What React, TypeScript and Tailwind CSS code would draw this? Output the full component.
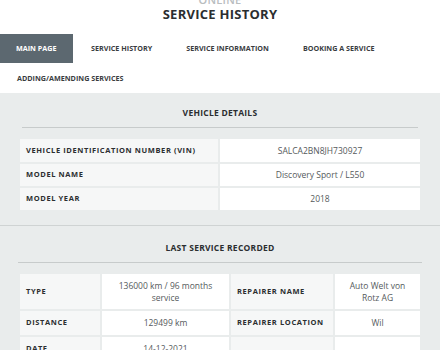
import React from 'react'

const font = { fontFamily: '"Open Sans", "Liberation Sans", sans-serif' }

const tabs = ['MAIN PAGE', 'SERVICE HISTORY', 'SERVICE INFORMATION', 'BOOKING A SERVICE']

function Label({ children, h }: { children?: React.ReactNode; h?: string }) {
  return (
    <div className={`flex items-center whitespace-nowrap bg-[#f6f7f7] pl-[6px] text-[7.5px] font-bold tracking-[0.08em] text-[#2b2e30] ${h ?? ''}`}>
      {children}
    </div>
  )
}

function Value({ children }: { children?: React.ReactNode }) {
  return (
    <div className="flex items-center justify-center bg-white px-2 text-center text-[8.5px] leading-[12px] text-[#555a5c]">
      {children}
    </div>
  )
}

export default function App() {
  return (
    <div className="w-[440px] h-[350px] overflow-hidden bg-white" style={font}>
      {/* header */}
      <div className="h-[34px] flex flex-col items-center">
        <div className="mt-[-7px] text-[11px] font-semibold tracking-wide text-[#b9bdbf] leading-[14px]">ONLINE</div>
        <div className="text-[13px] font-bold text-[#2b2e30] leading-[14px] tracking-[0.02em]">SERVICE HISTORY</div>
      </div>

      {/* nav */}
      <div className="h-[59px] bg-white">
        <div className="flex h-[29px] whitespace-nowrap text-[7.2px] font-bold text-[#3a3d3f]">
          {tabs.map((t, i) => (
            <div key={t}
              className={`flex items-center ${i === 0 ? 'bg-[#5c6870] text-white w-[73px] pl-[16px]' : 'px-[17px]'} ${i === 1 ? 'pl-[18px]' : ''}`}>
              {t}
            </div>
          ))}
        </div>
        <div className="flex h-[30px] items-center pl-[17px] text-[7.2px] font-bold text-[#3a3d3f]">
          ADDING/AMENDING SERVICES
        </div>
      </div>

      <div className="bg-[#e9ecec] h-[257px]">
        {/* vehicle details */}
        <div className="px-[20px] pb-[15px]">
          <div className="mx-[2px] flex h-[35px] items-end justify-center border-b-[1.5px] border-[#c7cbcb] pb-[7px] text-[8.5px] font-bold tracking-[0.03em] text-[#2b2e30]">
            VEHICLE DETAILS
          </div>
          <div className="mt-[11px] grid grid-cols-[198px_1fr] gap-[2px]">
            <Label h="h-[23px]">VEHICLE IDENTIFICATION NUMBER (VIN)</Label>
            <Value>SALCA2BN8JH730927</Value>
            <Label h="h-[22px]">MODEL NAME</Label>
            <Value>Discovery Sport / L550</Value>
            <Label h="h-[22px]">MODEL YEAR</Label>
            <Value>2018</Value>
          </div>
        </div>

        <div className="border-t-[1.5px] border-[#cfd3d3]" />

        {/* last service */}
        <div className="px-[20px]">
          <div className="mx-[-2px] flex h-[37px] items-end justify-center border-b-[1.5px] border-[#c7cbcb] pb-[7px] text-[8.5px] font-bold tracking-[0.03em] text-[#2b2e30]">
            LAST SERVICE RECORDED
          </div>
          <div className="mt-[11px] grid grid-cols-[80px_127px_102px_1fr] gap-[2px]">
            <Label h="h-[35px]">TYPE</Label>
            <Value>136000 km / 96 months service</Value>
            <Label>REPAIRER NAME</Label>
            <Value>Auto Welt von Rotz AG</Value>
            <Label h="h-[24px]">DISTANCE</Label>
            <Value>129499 km</Value>
            <Label>REPAIRER LOCATION</Label>
            <Value>Wil</Value>
            <Label h="h-[24px]">DATE</Label>
            <Value>14-12-2021</Value>
            <Label />
            <Value />
          </div>
        </div>
      </div>
    </div>
  )
}
